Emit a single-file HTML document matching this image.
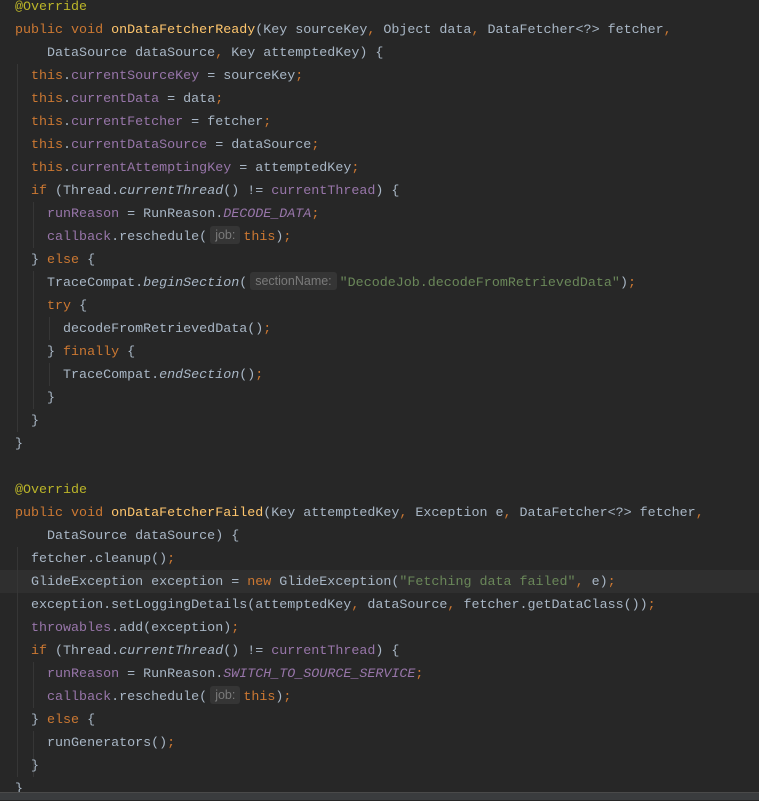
<!DOCTYPE html>
<html><head><meta charset="utf-8"><style>
html,body{margin:0;padding:0;background:#272727;width:759px;height:799px;overflow:hidden}
#c{position:absolute;left:15px;top:-4px;font-family:"Liberation Mono",monospace;font-size:13.35px;line-height:23px;color:#a9b7c6;white-space:pre}
.l{height:23px}
.k{color:#cc7832}.m{color:#ffc66d}.a{color:#bbb529}.f{color:#9876aa}.s{color:#6a8759}.i{font-style:italic}.fi{color:#9876aa;font-style:italic}
.h{display:inline-block;background:#353535;color:#7a7a7a;font-family:"Liberation Sans",sans-serif;font-size:12.5px;line-height:18px;padding:0 5px;border-radius:3px;margin:0 3px 0 3px;vertical-align:1px}
.hl{position:absolute;left:0;right:0;top:570px;height:23px;background:#2f2f2f}
.g{position:absolute;width:1px;background:#363636}
#sb{position:absolute;left:0;top:792px;width:759px;height:7px;background:#3a3c3e;border-top:1px solid #4a4a4a}
</style></head><body>
<div class="hl"></div>
<div class="g" style="left:17px;top:64px;height:368px"></div>
<div class="g" style="left:33px;top:202px;height:46px"></div>
<div class="g" style="left:33px;top:271px;height:138px"></div>
<div class="g" style="left:49px;top:317px;height:23px"></div>
<div class="g" style="left:49px;top:363px;height:23px"></div>
<div class="g" style="left:17px;top:547px;height:230px"></div>
<div class="g" style="left:33px;top:662px;height:46px"></div>
<div class="g" style="left:33px;top:731px;height:46px"></div>
<div id="c"><div class="l"><span class="a">@Override</span></div><div class="l"><span class="k">public void </span><span class="m">onDataFetcherReady</span>(Key sourceKey<span class="k">, </span>Object data<span class="k">, </span>DataFetcher&lt;?&gt; fetcher<span class="k">,</span></div><div class="l">    DataSource dataSource<span class="k">, </span>Key attemptedKey) {</div><div class="l">  <span class="k">this</span>.<span class="f">currentSourceKey</span> = sourceKey<span class="k">;</span></div><div class="l">  <span class="k">this</span>.<span class="f">currentData</span> = data<span class="k">;</span></div><div class="l">  <span class="k">this</span>.<span class="f">currentFetcher</span> = fetcher<span class="k">;</span></div><div class="l">  <span class="k">this</span>.<span class="f">currentDataSource</span> = dataSource<span class="k">;</span></div><div class="l">  <span class="k">this</span>.<span class="f">currentAttemptingKey</span> = attemptedKey<span class="k">;</span></div><div class="l">  <span class="k">if </span>(Thread.<span class="i">currentThread</span>() != <span class="f">currentThread</span>) {</div><div class="l">    <span class="f">runReason</span> = RunReason.<span class="fi">DECODE_DATA</span><span class="k">;</span></div><div class="l">    <span class="f">callback</span>.reschedule(<span class="h">job:</span><span class="k">this</span>)<span class="k">;</span></div><div class="l">  } <span class="k">else </span>{</div><div class="l">    TraceCompat.<span class="i">beginSection</span>(<span class="h">sectionName:</span><span class="s">"DecodeJob.decodeFromRetrievedData"</span>)<span class="k">;</span></div><div class="l">    <span class="k">try </span>{</div><div class="l">      decodeFromRetrievedData()<span class="k">;</span></div><div class="l">    } <span class="k">finally </span>{</div><div class="l">      TraceCompat.<span class="i">endSection</span>()<span class="k">;</span></div><div class="l">    }</div><div class="l">  }</div><div class="l">}</div><div class="l"> </div><div class="l"><span class="a">@Override</span></div><div class="l"><span class="k">public void </span><span class="m">onDataFetcherFailed</span>(Key attemptedKey<span class="k">, </span>Exception e<span class="k">, </span>DataFetcher&lt;?&gt; fetcher<span class="k">,</span></div><div class="l">    DataSource dataSource) {</div><div class="l">  fetcher.cleanup()<span class="k">;</span></div><div class="l">  GlideException exception = <span class="k">new </span>GlideException(<span class="s">"Fetching data failed"</span><span class="k">, </span>e)<span class="k">;</span></div><div class="l">  exception.setLoggingDetails(attemptedKey<span class="k">, </span>dataSource<span class="k">, </span>fetcher.getDataClass())<span class="k">;</span></div><div class="l">  <span class="f">throwables</span>.add(exception)<span class="k">;</span></div><div class="l">  <span class="k">if </span>(Thread.<span class="i">currentThread</span>() != <span class="f">currentThread</span>) {</div><div class="l">    <span class="f">runReason</span> = RunReason.<span class="fi">SWITCH_TO_SOURCE_SERVICE</span><span class="k">;</span></div><div class="l">    <span class="f">callback</span>.reschedule(<span class="h">job:</span><span class="k">this</span>)<span class="k">;</span></div><div class="l">  } <span class="k">else </span>{</div><div class="l">    runGenerators()<span class="k">;</span></div><div class="l">  }</div><div class="l">}</div></div>
<div id="sb"></div>
</body></html>
